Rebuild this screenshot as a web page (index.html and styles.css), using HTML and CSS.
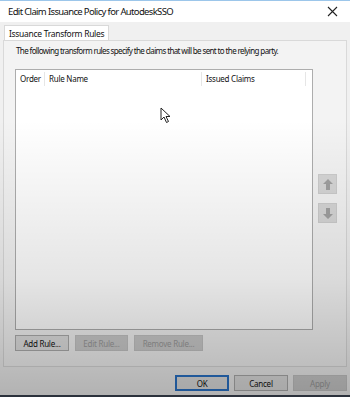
FILE: index.html
```html
<!DOCTYPE html>
<html>
<head>
<meta charset="utf-8">
<link rel="stylesheet" href="styles.css">
</head>
<body>
<div class="window">
  <div class="titlebar">
    <span class="title">Edit Claim Issuance Policy for AutodeskSSO</span>
    <svg class="close" width="11" height="11" viewBox="0 0 11 11"><path d="M1 1L10 10M10 1L1 10" stroke="#222" stroke-width="1.1"/></svg>
  </div>
  <div class="body">
    <div class="tabs"><div class="tab">Issuance Transform Rules</div></div>
    <div class="panel">
      <p class="desc">The following transform rules specify the claims that will be sent to the relying party.</p>
      <div class="listrow">
        <div class="list">
          <div class="head">
            <span class="col c-order">Order</span>
            <span class="col c-name">Rule Name</span>
            <span class="col c-claims">Issued Claims</span>
          </div>
          <svg class="cursor" width="12" height="17" viewBox="0 0 12 17"><path d="M1 1L1 13L4 10L6.5 15.5L8.5 14.5L6 9.5L10 9.5Z" fill="#fff" stroke="#222" stroke-width="1"/></svg>
        </div>
        <div class="arrows">
          <div class="abtn"><svg width="10" height="11" viewBox="0 0 10 11"><path d="M5 0L10 5H7V11H3V5H0Z" fill="#a0a0a0"/></svg></div>
          <div class="abtn"><svg width="10" height="11" viewBox="0 0 10 11"><path d="M5 11L10 6H7V0H3V6H0Z" fill="#a0a0a0"/></svg></div>
        </div>
      </div>
      <div class="rulebtns">
        <button class="btn w-add">Add Rule...</button>
        <button class="btn dis w-edit">Edit Rule...</button>
        <button class="btn dis w-rem">Remove Rule...</button>
      </div>
    </div>
    <div class="footer">
      <button class="btn def w-ok">OK</button>
      <button class="btn w-ok">Cancel</button>
      <button class="btn dis w-ok">Apply</button>
    </div>
  </div>
  <div class="taskbar"></div>
  <div class="shade"></div>
</div>
</body>
</html>
```
FILE: styles.css
```css
* { box-sizing: border-box; }
html, body { margin: 0; padding: 0; }
body { width: 350px; height: 397px; overflow: hidden; font-family: "Noto Sans", "DejaVu Sans", sans-serif; color: #111; }
.window { position: relative; width: 350px; height: 397px; background: #f0f0f0; display: flex; flex-direction: column; border-top: 1px solid #9cc6ea; }
.titlebar { height: 21px; background: #fff; display: flex; align-items: center; justify-content: space-between; padding: 0 12px 0 8px; }
.title { font-size: 9.5px; letter-spacing: -0.65px; }
.close { display: block; }
.body { flex: 1; display: flex; flex-direction: column; padding: 3px 3px 0 3px; }
.tabs { display: flex; height: 15px; }
.tab { font-size: 8.5px; letter-spacing: -0.3px; padding: 1px 4px 0 4px; background: #fff; border: 1px solid #d9d9d9; border-bottom: none; margin-left: 1px; line-height: 13px; }
.panel { height: 327px; border: 1px solid #d9d9d9; background: #f3f3f3; padding: 0 0 0 11px; display: flex; flex-direction: column; }
.desc { margin: 4px 0 0 1px; font-size: 8px; letter-spacing: -0.62px; line-height: 12px; white-space: nowrap; }
.listrow { display: flex; margin-top: 12px; }
.list { position: relative; width: 298px; height: 261px; background: #fff; border: 1px solid #adadad; }
.head { display: flex; height: 18px; align-items: center; font-size: 8px; letter-spacing: -0.25px; }
.col { height: 14px; line-height: 13px; padding-left: 4px; border-right: 1px solid #e6e6e6; }
.c-order { width: 29px; }
.c-name { width: 157px; }
.c-claims { width: 104px; }
.cursor { position: absolute; left: 144px; top: 37px; }
.arrows { display: flex; flex-direction: column; gap: 9px; margin: 105px 0 0 5px; }
.abtn { width: 19px; height: 20px; background: #d6d6d6; border: 1px solid #cccccc; display: flex; align-items: center; justify-content: center; }
.rulebtns { display: flex; gap: 6px; margin-top: 5px; }
.btn { font-family: inherit; font-size: 8px; letter-spacing: -0.25px; height: 16px; padding: 0; background: #e1e1e1; border: 1px solid #adadad; color: #111; line-height: 13px; }
.btn.dis { background: #cccccc; border-color: #c4c4c4; color: #9a9a9a; }
.btn.def { border: 2px solid #2a73c8; }
.w-add { width: 54px; }
.w-edit { width: 53px; }
.w-rem { width: 69px; }
.w-ok { width: 54px; }
.footer { display: flex; justify-content: flex-end; gap: 5px; padding: 8px 0 0 0; }
.taskbar { height: 2px; background: #3a4250; margin-top: auto; }
.shade { position: absolute; inset: 0; pointer-events: none; background: linear-gradient(to bottom, rgba(0,0,0,0) 0%, rgba(0,0,0,0) 30%, rgba(0,0,0,0.1) 70%, rgba(0,0,0,0.26) 100%); }
```
